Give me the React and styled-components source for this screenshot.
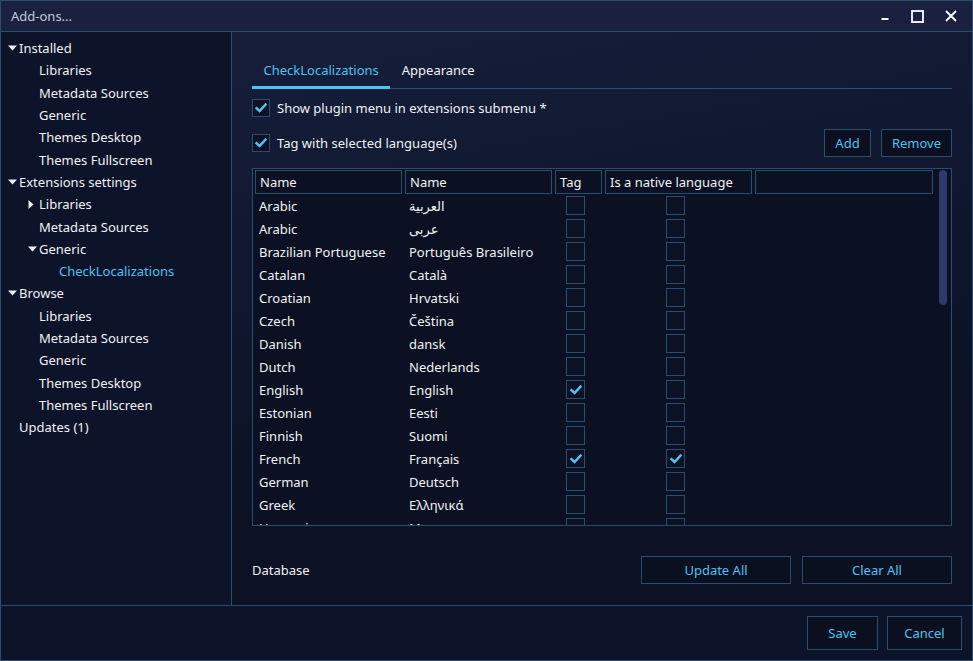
import React from "react";
import styled, { createGlobalStyle } from "styled-components";

const Global = createGlobalStyle`
  html, body { margin: 0; padding: 0; background: #0c1224; }
  * { box-sizing: border-box; }
  body { font-family: "Noto Sans", "DejaVu Sans", sans-serif; font-size: 13px; color: #eef0f5; }
`;

const ACCENT = "#4fc1f3";
const LINE = "#2c4d6e";

const Window = styled.div`
  width: 973px;
  height: 661px;
  border: 1px solid ${LINE};
  display: flex;
  flex-direction: column;
  background: #0d1328;
  overflow: hidden;
`;

const TitleBar = styled.div`
  height: 31px;
  flex: none;
  background: #1a2140;
  border-bottom: 1px solid ${LINE};
  display: flex;
  align-items: center;
  padding-left: 10px;
  padding-right: 5px;
`;

const Title = styled.div`
  flex: 1;
  color: #c5cad6;
  font-size: 13px;
`;

const WinButton = styled.div`
  width: 33px;
  height: 30px;
  display: flex;
  align-items: center;
  justify-content: center;
`;

const Body = styled.div`
  flex: 1;
  display: flex;
  min-height: 0;
`;

const Sidebar = styled.div`
  width: 231px;
  flex: none;
  border-right: 1px solid ${LINE};
  background: #0d1328;
  padding-top: 5px;
`;

const TreeRow = styled.div`
  height: 22.3px;
  display: flex;
  align-items: center;
  padding-left: ${(p) => p.$level * 20 + 7}px;
  color: ${(p) => (p.$active ? ACCENT : "#f0f2f6")};
  white-space: nowrap;
`;

const Arrow = styled.span`
  width: 11px;
  flex: none;
  display: flex;
  align-items: center;
  justify-content: flex-start;
`;

const Main = styled.div`
  flex: 1;
  display: flex;
  flex-direction: column;
  padding: 23px 20px 20px 20px;
  background: linear-gradient(170deg, #171e3a 0%, #111831 30%, #0c1224 70%);
`;

const TabBar = styled.div`
  display: flex;
  border-bottom: 1px solid ${LINE};
  height: 34px;
`;

const Tab = styled.div`
  padding: 0 11.5px 1px;
  display: flex;
  align-items: center;
  color: ${(p) => (p.$active ? ACCENT : "#f0f2f6")};
  border-bottom: 3px solid ${(p) => (p.$active ? ACCENT : "transparent")};
  margin-bottom: -1px;
`;

const CheckRow = styled.div`
  display: flex;
  align-items: center;
  height: ${(p) => p.$h}px;
  margin-top: ${(p) => p.$mt}px;
  gap: 7px;
`;

const Spacer = styled.div`
  flex: 1;
`;

const BoxEl = styled.div`
  width: ${(p) => p.$size}px;
  height: ${(p) => p.$size}px;
  border: 1px solid ${LINE};
  background: #0c1224;
  display: flex;
  align-items: center;
  justify-content: center;
  flex: none;
  margin-left: ${(p) => p.$ml || 0}px;
`;

const Check = () => (
  <svg width="12" height="10" viewBox="0 0 12 10">
    <path d="M1.5 5.2 L4.6 8 L10.5 1.5" stroke={ACCENT} strokeWidth="2.4" fill="none" strokeLinecap="square" />
  </svg>
);

const Box = ({ checked, size = 19, ml }) => (
  <BoxEl $size={size} $ml={ml}>{checked && <Check />}</BoxEl>
);

const Button = styled.div`
  height: ${(p) => p.$h || 28}px;
  width: ${(p) => p.$w}px;
  border: 1px solid ${LINE};
  background: #0a1020;
  color: ${ACCENT};
  display: flex;
  align-items: center;
  justify-content: center;
  font-size: 13px;
  flex: none;
`;

const ButtonGroup = styled.div`
  display: flex;
  gap: ${(p) => p.$gap}px;
`;

const Table = styled.div`
  margin-top: 11px;
  height: 358px;
  border: 1px solid ${LINE};
  display: flex;
  overflow: hidden;
  background: #0b1122;
`;

const TableContent = styled.div`
  flex: 1;
  padding: 1px 0 0 2px;
  overflow: hidden;
`;

const Grid = styled.div`
  display: grid;
  grid-template-columns: 150px 150px 50px 150px 178px;
`;

const HeadCell = styled.div`
  height: 24px;
  border: 1px solid ${LINE};
  margin-right: ${(p) => (p.$last ? 0 : 3)}px;
  display: flex;
  align-items: center;
  padding-left: 4px;
  color: #f0f2f6;
`;

const Cell = styled.div`
  height: 23px;
  display: flex;
  align-items: center;
  padding-left: 4px;
  white-space: nowrap;
  color: #f0f2f6;
`;

const BoxCell = styled.div`
  height: 23px;
  display: flex;
  align-items: center;
`;

const ScrollTrack = styled.div`
  width: 18px;
  flex: none;
  padding: 1px 4px 0 6px;
`;

const Thumb = styled.div`
  width: 8px;
  height: 135px;
  border-radius: 4px;
  background: #2f3a6c;
`;

const BottomRow = styled.div`
  margin-top: 30px;
  display: flex;
  align-items: center;
  height: 28px;
`;

const Footer = styled.div`
  height: 55px;
  flex: none;
  border-top: 1px solid ${LINE};
  background: #0d1328;
  display: flex;
  justify-content: flex-end;
  align-items: center;
  padding-right: 10px;
  gap: 9px;
`;

const Tri = ({ dir }) =>
  dir === "down" ? (
    <svg width="9" height="6" viewBox="0 0 9 6"><path d="M0 0.5 H9 L4.5 5.5 Z" fill="#eef0f5" /></svg>
  ) : (
    <svg width="6" height="9" viewBox="0 0 6 9"><path d="M0.5 0 V9 L5.5 4.5 Z" fill="#eef0f5" /></svg>
  );

const tree = [
  { t: "Installed", l: 0, a: "down" },
  { t: "Libraries", l: 1 },
  { t: "Metadata Sources", l: 1 },
  { t: "Generic", l: 1 },
  { t: "Themes Desktop", l: 1 },
  { t: "Themes Fullscreen", l: 1 },
  { t: "Extensions settings", l: 0, a: "down" },
  { t: "Libraries", l: 1, a: "right" },
  { t: "Metadata Sources", l: 1 },
  { t: "Generic", l: 1, a: "down" },
  { t: "CheckLocalizations", l: 2, active: true },
  { t: "Browse", l: 0, a: "down" },
  { t: "Libraries", l: 1 },
  { t: "Metadata Sources", l: 1 },
  { t: "Generic", l: 1 },
  { t: "Themes Desktop", l: 1 },
  { t: "Themes Fullscreen", l: 1 },
  { t: "Updates (1)", l: 0 },
];

const langs = [
  ["Arabic", "العربية"],
  ["Arabic", "عربى"],
  ["Brazilian Portuguese", "Português Brasileiro"],
  ["Catalan", "Català"],
  ["Croatian", "Hrvatski"],
  ["Czech", "Čeština"],
  ["Danish", "dansk"],
  ["Dutch", "Nederlands"],
  ["English", "English", true, false],
  ["Estonian", "Eesti"],
  ["Finnish", "Suomi"],
  ["French", "Français", true, true],
  ["German", "Deutsch"],
  ["Greek", "Ελληνικά"],
  ["Hungarian", "Magyar"],
];

export default function App() {
  return (
    <>
      <Global />
      <Window>
        <TitleBar>
          <Title>Add-ons...</Title>
          <WinButton>
            <svg width="10" height="12" viewBox="0 0 10 12"><rect x="1.5" y="8" width="7" height="2" fill="#ffffff" /></svg>
          </WinButton>
          <WinButton>
            <svg width="13" height="13" viewBox="0 0 13 13"><rect x="1" y="1" width="11" height="11" fill="none" stroke="#ffffff" strokeWidth="1.8" /></svg>
          </WinButton>
          <WinButton>
            <svg width="12" height="12" viewBox="0 0 12 12"><path d="M1 1 L11 11 M11 1 L1 11" stroke="#ffffff" strokeWidth="1.8" /></svg>
          </WinButton>
        </TitleBar>
        <Body>
          <Sidebar>
            {tree.map((n, i) => (
              <TreeRow key={i} $level={n.l} $active={n.active}>
                <Arrow>{n.a && <Tri dir={n.a} />}</Arrow>
                {n.t}
              </TreeRow>
            ))}
          </Sidebar>
          <Main>
            <TabBar>
              <Tab $active>CheckLocalizations</Tab>
              <Tab>Appearance</Tab>
            </TabBar>
            <CheckRow $h={18} $mt={10}>
              <Box checked size={18} />
              Show plugin menu in extensions submenu *
            </CheckRow>
            <CheckRow $h={28} $mt={12}>
              <Box checked size={18} />
              Tag with selected language(s)
              <Spacer />
              <ButtonGroup $gap={10}>
                <Button $w={47}>Add</Button>
                <Button $w={71}>Remove</Button>
              </ButtonGroup>
            </CheckRow>
            <Table>
              <TableContent>
                <Grid>
                  <HeadCell>Name</HeadCell>
                  <HeadCell>Name</HeadCell>
                  <HeadCell>Tag</HeadCell>
                  <HeadCell>Is a native language</HeadCell>
                  <HeadCell $last />
                  {langs.map(([a, b, tag, nat], i) => (
                    <React.Fragment key={i}>
                      <Cell>{a}</Cell>
                      <Cell>{b}</Cell>
                      <BoxCell><Box checked={tag} ml={11} /></BoxCell>
                      <BoxCell><Box checked={nat} ml={61} /></BoxCell>
                      <Cell />
                    </React.Fragment>
                  ))}
                </Grid>
              </TableContent>
              <ScrollTrack>
                <Thumb />
              </ScrollTrack>
            </Table>
            <BottomRow>
              Database
              <Spacer />
              <ButtonGroup $gap={11}>
                <Button $w={150}>Update All</Button>
                <Button $w={150}>Clear All</Button>
              </ButtonGroup>
            </BottomRow>
          </Main>
        </Body>
        <Footer>
          <Button $w={71} $h={34}>Save</Button>
          <Button $w={75} $h={34}>Cancel</Button>
        </Footer>
      </Window>
    </>
  );
}
